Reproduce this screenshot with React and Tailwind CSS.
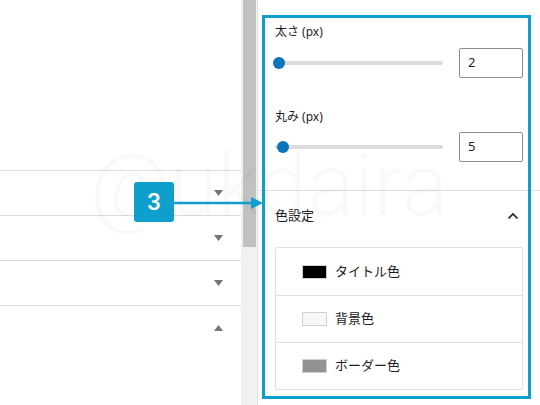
import React from "react";

const jp = { fontFamily: '"Noto Sans", "Noto Sans CJK JP", sans-serif' };

function Down() {
  return (
    <svg width="9" height="6" viewBox="0 0 9 6"><path d="M0 0h9L4.5 6z" fill="#757575" /></svg>
  );
}
function Up() {
  return (
    <svg width="9" height="6" viewBox="0 0 9 6"><path d="M0 6h9L4.5 0z" fill="#757575" /></svg>
  );
}

function Slider({ pos, value }) {
  return (
    <div className="flex items-center h-[30px]">
      <div className="relative w-[168px] h-[4px] rounded-full bg-[#dcdcde]">
        <div
          className="absolute top-1/2 -translate-y-1/2 -translate-x-1/2 w-[12px] h-[12px] rounded-full bg-[#0a75bb]"
          style={{ left: pos }}
        />
      </div>
      <div className="ml-[16px] w-[64px] h-[30px] border border-[#8c8c8c] rounded-[2px] flex items-center pl-[8px] text-[13px] text-[#1e1e1e]">
        {value}
      </div>
    </div>
  );
}

function ColorRow({ color, label, first }) {
  return (
    <div className={`h-[47px] flex items-center pl-[26px] ${first ? "" : "border-t border-[#e0e0e0]"}`}>
      <div className="w-[25px] h-[14px] border border-[#d0d0d0]" style={{ background: color }} />
      <span className="ml-[8px] text-[13px] text-[#1e1e1e]">{label}</span>
    </div>
  );
}

export default function App() {
  return (
    <div className="relative w-[540px] h-[405px] overflow-hidden bg-white flex" style={jp}>
      {/* left panel */}
      <div className="w-[241px] h-full flex flex-col">
        <div className="h-[170px]" />
        {[0, 1, 2].map((i) => (
          <div key={i} className="h-[45px] border-t border-[#dcdcdc] flex items-center justify-end pr-[18px]">
            <Down />
          </div>
        ))}
        <div className="h-[45px] border-t border-[#dcdcdc] flex items-center justify-end pr-[18px]">
          <Up />
        </div>
      </div>
      {/* scrollbar */}
      <div className="w-[17px] h-full bg-[#f1f1f1] border-r border-[#e0e0e0] pl-[2px] pr-[1px]">
        <div className="w-[13px] h-[247px] bg-[#c1c1c1]" />
      </div>
      {/* sidebar */}
      <div className="flex-1 h-full flex flex-col">
        <div className="px-[17px] pt-[25px] pb-[28px] border-b border-[#e0e0e0]">
          <div className="text-[12px] leading-[14px] text-[#1e1e1e]">太さ (px)</div>
          <div className="mt-[9px]"><Slider pos="4px" value="2" /></div>
          <div className="mt-[32px] text-[12px] leading-[14px] text-[#1e1e1e]">丸み (px)</div>
          <div className="mt-[8px]"><Slider pos="8px" value="5" /></div>
        </div>
        <div className="h-[50px] px-[17px] flex items-center justify-between">
          <span className="text-[13px] text-[#1e1e1e]">色設定</span>
          <svg width="12" height="8" viewBox="0 0 12 8" className="mr-[4px]">
            <path d="M1.5 6.5L6 2l4.5 4.5" fill="none" stroke="#1e1e1e" strokeWidth="1.6" />
          </svg>
        </div>
        <div className="mx-[17px] mt-[6px] border border-[#e0e0e0] rounded-[2px]">
          <ColorRow color="#000000" label="タイトル色" first />
          <ColorRow color="#f7f7f7" label="背景色" />
          <ColorRow color="#929292" label="ボーダー色" />
        </div>
      </div>

      {/* watermark */}
      <div
        className="absolute left-[90px] top-[142px] text-[87px] leading-none font-light text-black/[0.025] pointer-events-none"
        style={{ fontFamily: "Roboto, sans-serif" }}
      >
        @ukdaira
      </div>

      {/* highlight box */}
      <div className="absolute left-[262px] top-[15px] w-[269px] h-[384px] border-[3px] border-[#0e9fcc] pointer-events-none" />

      {/* badge */}
      <div
        className="absolute left-[134px] top-[182px] w-[40px] h-[40px] rounded-[3px] bg-[#0e9fcc] flex items-center justify-center text-white text-[24px] font-medium"
        style={{ fontFamily: "Roboto, sans-serif" }}
      >
        3
      </div>
      {/* arrow */}
      <svg className="absolute left-[174px] top-[195px]" width="90" height="16" viewBox="0 0 90 16">
        <line x1="0" y1="8" x2="80" y2="8" stroke="#0e9fcc" strokeWidth="2.5" />
        <path d="M77 2L89 8L77 14z" fill="#0e9fcc" />
      </svg>
    </div>
  );
}
